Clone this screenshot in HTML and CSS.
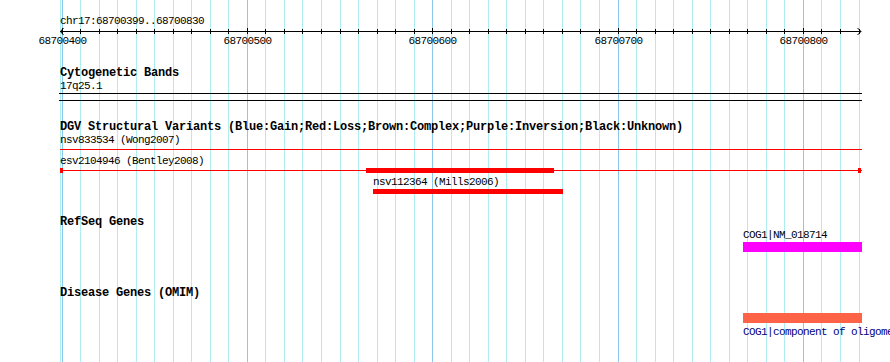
FILE: index.html
```html
<!DOCTYPE html>
<html lang="en">
<head>
	<meta charset="UTF-8">
	<title>chr17:68700399..68700830</title>
	<link rel="stylesheet" href="styles.css">
</head>
<body>
	<div class="panel">
		<svg class="grid" id="grid" width="890" height="362"></svg>

		<div class="ruler">
			<div class="ruler-name">chr17:68700399..68700830</div>
			<svg class="axis" id="axis" width="890" height="20">
				<line class="axis-line" x1="60" y1="3.5" x2="861" y2="3.5"></line>
				<polyline class="axis-line" points="63.5,0 60.5,3.5 63.5,7"></polyline>
				<polyline class="axis-line" points="857.5,0 861,3.5 857.5,7"></polyline>
			</svg>
		</div>

		<div class="track track-cyto">
			<div class="track-title">Cytogenetic Bands</div>
			<div class="band-label">17q25.1</div>
			<div class="band"></div>
		</div>

		<div class="track track-dgv">
			<div class="track-title">DGV Structural Variants (Blue:Gain;Red:Loss;Brown:Complex;Purple:Inversion;Black:Unknown)</div>
			<div class="lane lane-dgv">
				<div class="feature" style="left:60px;top:0">
					<div class="feat-label">nsv833534 (Wong2007)</div>
					<div class="glyph-line" style="width:802px"></div>
				</div>
				<div class="feature" style="left:60px;top:21px">
					<div class="feat-label">esv2104946 (Bentley2008)</div>
					<div class="glyph-line capped" style="width:802px"></div>
				</div>
				<div class="feature" style="left:366px;top:34px">
					<div class="glyph-bar loss" style="width:188px"></div>
				</div>
				<div class="feature" style="left:373px;top:42px">
					<div class="feat-label">nsv112364 (Mills2006)</div>
					<div class="glyph-bar loss" style="width:190px"></div>
				</div>
			</div>
		</div>

		<div class="track track-refseq">
			<div class="track-title">RefSeq Genes</div>
			<div class="lane lane-refseq">
				<div class="feature" style="left:743px;top:0">
					<div class="feat-label">COG1|NM_018714</div>
					<div class="glyph-gene refseq" style="width:119px"></div>
				</div>
			</div>
		</div>

		<div class="track track-omim">
			<div class="track-title">Disease Genes (OMIM)</div>
			<div class="lane lane-omim">
				<div class="feature" style="left:743px;top:13px">
					<div class="glyph-gene omim" style="width:119px"></div>
					<div class="feat-desc">COG1|component of oligomeric golgi complex 1</div>
				</div>
			</div>
		</div>
	</div>

	<script>
		var viewStart = 68700400
		var viewEnd = 68700830
		var originX = 62
		var pxPerBp = 1.8535
		var svgNS = "http://www.w3.org/2000/svg"

		function bpToX(bp) {
			return Math.floor(originX + (bp - viewStart) * pxPerBp)
		}

		function addLine(parent, x1, y1, x2, y2, cls) {
			let l = document.createElementNS(svgNS, 'line')
			l.setAttribute('x1', x1)
			l.setAttribute('y1', y1)
			l.setAttribute('x2', x2)
			l.setAttribute('y2', y2)
			l.setAttribute('class', cls)
			parent.appendChild(l)
		}

		var grid = document.getElementById('grid')
		var axis = document.getElementById('axis')

		addLine(grid, 60.5, 0, 60.5, 362, 'minor')
		for(let bp = viewStart; bp <= viewEnd; bp += 10) {
			let x = bpToX(bp) + 0.5
			let major = bp % 100 == 0
			addLine(grid, x, 0, x, 362, major ? 'major' : 'minor')
			addLine(axis, x, major ? 0 : 1, x, 6, 'tick')
			if(major) {
				let t = document.createElementNS(svgNS, 'text')
				t.setAttribute('x', x)
				t.setAttribute('y', 16)
				t.setAttribute('class', 'tick-label')
				t.textContent = bp
				axis.appendChild(t)
			}
		}
	</script>
</body>
</html>
```

FILE: styles.css
```css
body {
	margin: 0;
	background: #fff;
}

.panel {
	position: relative;
	z-index: 0;
	width: 890px;
	height: 362px;
	overflow: hidden;
	font-family: "Liberation Mono", "DejaVu Sans Mono", monospace;
	font-size: 11px;
	line-height: 13px;
	letter-spacing: -0.6px;
	color: #000;
}

.grid {
	position: absolute;
	left: 0;
	top: 0;
	z-index: -1;
	shape-rendering: crispEdges;
}
.grid .minor {
	stroke: #aeeef0;
}
.grid .major {
	stroke: #8cc8ec;
}

.ruler {
	height: 48px;
}
.ruler-name {
	padding: 15px 0 0 60px;
}
.axis {
	display: block;
}
.axis line, .axis polyline {
	stroke: #000;
	fill: none;
	shape-rendering: crispEdges;
}
.axis polyline {
	shape-rendering: auto;
}
.tick-label {
	font-family: "Liberation Mono", "DejaVu Sans Mono", monospace;
	font-size: 11px;
	letter-spacing: -0.6px;
	text-anchor: middle;
	fill: #000;
}

.track-title {
	padding-left: 60px;
	font-size: 12px;
	font-weight: bold;
	letter-spacing: -0.2px;
	white-space: nowrap;
}
.track-cyto {
	margin-top: 19px;
}
.track-dgv {
	margin-top: 20px;
}
.track-refseq {
	margin-top: 20px;
}
.track-omim {
	margin-top: 35px;
}

.band-label {
	padding-left: 60px;
}
.band {
	margin-left: 59px;
	width: 803px;
	height: 8px;
	box-sizing: border-box;
	border-top: 1px solid #000;
	border-bottom: 1px solid #000;
}

.lane {
	position: relative;
}
.lane-dgv {
	height: 62px;
}
.lane-refseq {
	height: 23px;
}
.lane-omim {
	height: 40px;
}

.feature {
	position: absolute;
	white-space: nowrap;
}

.glyph-line {
	position: relative;
	height: 1px;
	margin: 2px 0;
	background: #f00;
}
.capped::before, .capped::after {
	content: "";
	position: absolute;
	top: -2px;
	width: 3px;
	height: 5px;
	background: #f00;
}
.capped::before {
	left: 0;
}
.capped::after {
	right: 1px;
}

.glyph-bar {
	height: 5px;
}
.loss {
	background: #f00;
}

.glyph-gene {
	height: 10px;
}
.refseq {
	background: #f0f;
}
.omim {
	background: #ff6347;
}

.feat-desc {
	margin-top: 3px;
	color: #000080;
}
```
